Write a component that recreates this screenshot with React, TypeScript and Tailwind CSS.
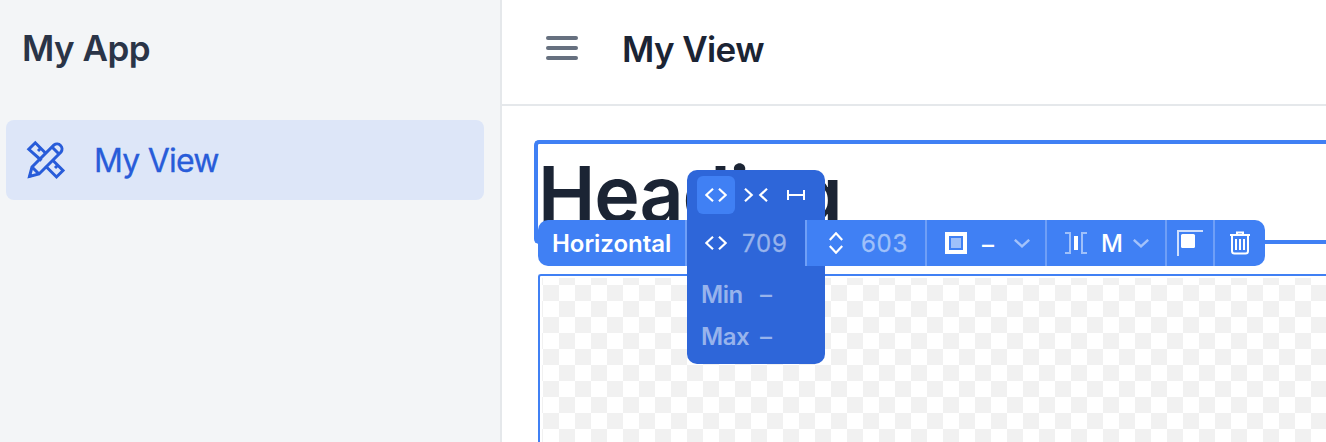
import type { ReactNode } from "react";

const checker =
  "bg-[repeating-conic-gradient(#f1f1f1_0_25%,#ffffff_0_50%)] bg-[length:32px_32px] bg-[position:-15px_7px]";

function DesignIcon() {
  return (
    <svg className="h-10 w-10" viewBox="0 0 40 40" fill="none" stroke="currentColor" strokeWidth="3">
      <path d="M15.5 20.5 2.8 9.3 9.3 2.8 19.5 13" />
      <path d="M12 11 15 8" />
      <path d="M26.5 20 37 30.5 30.5 37 19.5 26" />
      <path d="M29 28 32 25" />
      <path d="M3.5 36.5 6 27 28 5a5 5 0 0 1 7 7L13 34Z" />
      <path d="M6 27 13 34M26 7 33 14" />
      <path d="M2 38 3.5 32.5 7.5 36.5Z" fill="currentColor" stroke="none" />
    </svg>
  );
}

function Angles() {
  return (
    <svg width="22" height="14" viewBox="0 0 22 14" fill="none" stroke="currentColor" strokeWidth="2.2">
      <path d="M8 0.8 1.3 7 8 13.2M14 0.8 20.7 7 14 13.2" />
    </svg>
  );
}

function Chevron() {
  return (
    <svg className="text-[#a3c2fb]" width="16" height="9" viewBox="0 0 16 9" fill="none" stroke="currentColor" strokeWidth="2.4">
      <path d="M0.8 0.8 8 7.3 15.2 0.8" />
    </svg>
  );
}

function Cell({ className, children }: { className: string; children: ReactNode }) {
  return <div className={`flex h-full shrink-0 items-center ${className}`}>{children}</div>;
}

function SizePopup() {
  return (
    <div className="absolute left-[149px] top-[-50px] h-[194px] w-[138px] rounded-[10px] bg-[#2e66d9] text-white">
      <div className="flex h-[50px] items-center pl-[10px]">
        <div className="flex h-[38px] w-[38px] items-center justify-center rounded-md bg-[#4080f4]">
          <Angles />
        </div>
        <svg className="ml-[9px]" width="24" height="14" viewBox="0 0 24 14" fill="none" stroke="currentColor" strokeWidth="2.2">
          <path d="M1 0.8 7.7 7 1 13.2M23 0.8 16.3 7 23 13.2" />
        </svg>
        <svg className="ml-[19px]" width="18" height="10" viewBox="0 0 18 10" fill="none" stroke="currentColor" strokeWidth="2">
          <path d="M1 0V10M17 0V10M1 5H17" />
        </svg>
      </div>
      <div className="mt-[54px] pl-[14px] text-[24px] font-semibold leading-[42px] tracking-[-0.5px] text-[#97b3ec]">
        <div className="flex h-[42px]"><span className="w-[59px]">Min</span><span className="font-medium">–</span></div>
        <div className="flex h-[42px]"><span className="w-[59px]">Max</span><span className="font-medium">–</span></div>
      </div>
    </div>
  );
}

function Toolbar() {
  return (
    <div className="absolute left-0 top-[76px] z-10 h-[46px] w-[727px]">
      <SizePopup />
      <div className="relative flex h-full overflow-hidden rounded-[10px] bg-[#4080f4] text-[24px] leading-none text-white">
        <Cell className="w-[149px] border-r-2 border-[#6f9ff7] pl-[14px] pt-[2px] font-semibold tracking-[-0.05px]">Horizontal</Cell>
        <Cell className="w-[120px] border-r-2 border-[#6f9ff7] bg-[#2e66d9] pl-[18px]">
          <Angles />
          <span className="ml-[15px] pt-[2px] tracking-[0.8px] text-[#97b3ec] [-webkit-text-stroke:0.3px_currentColor]">709</span>
        </Cell>
        <Cell className="w-[120px] border-r-2 border-[#6f9ff7] pl-[22px]">
          <svg width="14" height="22" viewBox="0 0 14 22" fill="none" stroke="currentColor" strokeWidth="2.2">
            <path d="M0.8 8 7 1.3 13.2 8M0.8 14 7 20.7 13.2 14" />
          </svg>
          <span className="ml-[18px] pt-[2px] tracking-[0.7px] text-[#9fc0fa] [-webkit-text-stroke:0.3px_currentColor]">603</span>
        </Cell>
        <Cell className="w-[120px] border-r-2 border-[#6f9ff7] pl-[18px]">
          <div className="flex h-[22px] w-[22px] items-center justify-center border-4 border-white">
            <div className="h-[10px] w-[10px] bg-[#9fc0fa]" />
          </div>
          <span className="ml-[15px] w-[32px] pt-[3px] font-medium">–</span>
          <Chevron />
        </Cell>
        <Cell className="w-[120px] border-r-2 border-[#6f9ff7] pl-[18px]">
          <svg width="22" height="22" viewBox="0 0 22 22" fill="none">
            <path d="M0 1H5V21H0M22 1H17V21H22" stroke="#9fc0fa" strokeWidth="2" />
            <path d="M9 4h4v14H9Z" fill="white" />
          </svg>
          <span className="ml-[14px] w-[32px] pt-[2px] font-medium">M</span>
          <Chevron />
        </Cell>
        <Cell className="w-[48px] border-r-2 border-[#6f9ff7] pl-[10px]">
          <svg width="26" height="26" viewBox="0 0 26 26" fill="none">
            <path d="M1 26V1H26" stroke="#cfdffd" strokeWidth="2" />
            <rect x="4" y="4" width="14" height="14" rx="1.5" fill="white" />
          </svg>
        </Cell>
        <Cell className="w-[50px] pl-[15px]">
          <svg width="20" height="24" viewBox="0 0 20 24" fill="none" stroke="white" strokeWidth="2">
            <path d="M0 4H20M2 4V20a2.5 2.5 0 0 0 2.5 2.5H15.5A2.5 2.5 0 0 0 18 20V4" />
            <path d="M6 8V19M10 8V19M14 8V19" />
            <path d="M7 4V1.5H13V4" />
          </svg>
        </Cell>
      </div>
    </div>
  );
}

export default function App() {
  return (
    <div className="flex h-[442px] w-full overflow-hidden bg-white font-['Inter',sans-serif] text-[#1b2434]">
      <aside className="w-[502px] shrink-0 border-r-2 border-[#e5e8eb] bg-[#f3f5f7]">
        <div className="flex h-[120px] items-start pl-[22px] pt-[26px] text-[35px] font-semibold leading-[44px] tracking-[-0.5px] text-[#2a3447]">
          My App
        </div>
        <div className="ml-[6px] flex h-[80px] w-[478px] items-center rounded-lg bg-[#dde6f8] pl-[20px] text-[#285cd9]">
          <DesignIcon />
          <span className="ml-[28px] pt-[2px] text-[32px] tracking-[-0.8px] [-webkit-text-stroke:0.3px_currentColor]">My View</span>
        </div>
      </aside>
      <main className="flex min-w-0 grow flex-col">
        <header className="flex h-[106px] shrink-0 items-center border-b-2 border-[#e5e8eb] pl-[44px]">
          <div className="mb-[8px] flex w-8 flex-col gap-[6px]">
            <div className="h-1 rounded-full bg-[#66707f]" />
            <div className="h-1 rounded-full bg-[#66707f]" />
            <div className="h-1 rounded-full bg-[#66707f]" />
          </div>
          <span className="mb-[5px] ml-[44px] text-[35px] font-semibold tracking-[-0.6px]">My View</span>
        </header>
        <div className="relative ml-[32px] mt-[34px] h-[104px] shrink-0 rounded-l-[5px] border-4 border-r-0 border-[#4080f4]">
          <h1 className="text-[77px] font-semibold leading-[100px] tracking-[-1.1px]">Heading</h1>
          <Toolbar />
        </div>
        <div className="ml-[36px] mt-[30px] grow rounded-tl-[3px] border-l-2 border-t-2 border-[#4080f4] pl-[2px] pt-[2px]">
          <div className={`h-full ${checker}`} />
        </div>
      </main>
    </div>
  );
}
